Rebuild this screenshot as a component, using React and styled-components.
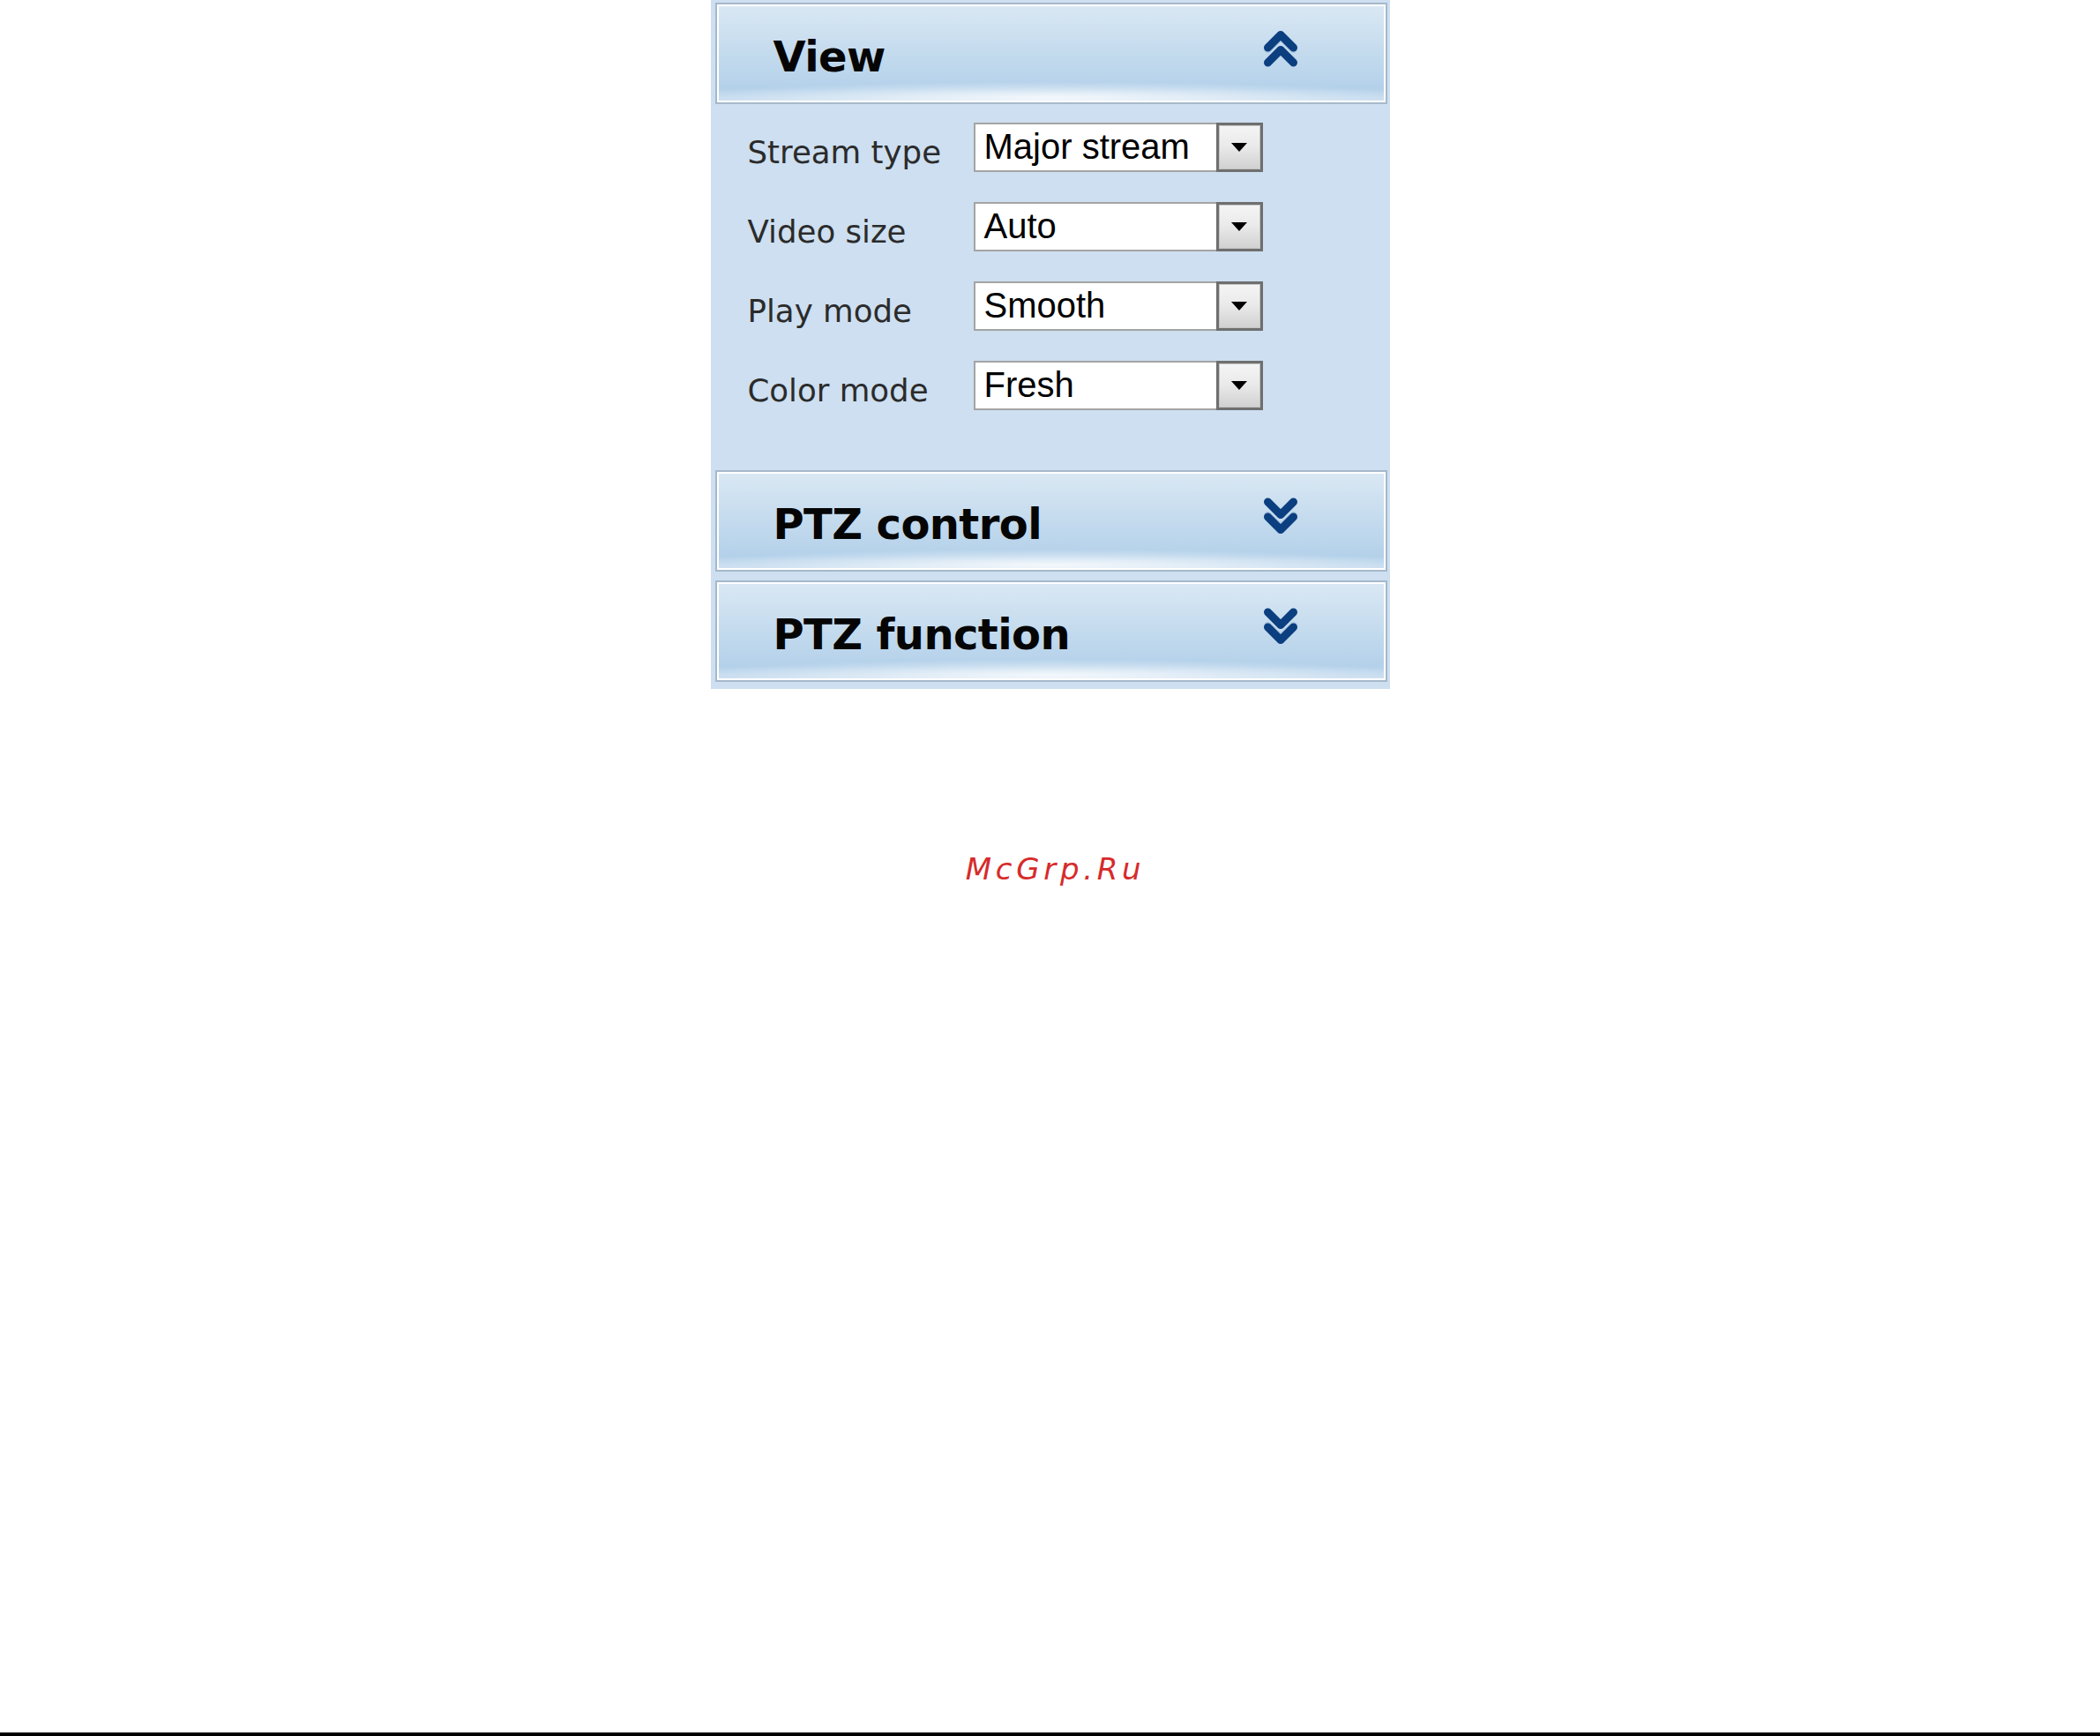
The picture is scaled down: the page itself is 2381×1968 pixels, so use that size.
import styled, { createGlobalStyle } from "styled-components";

const GlobalStyle = createGlobalStyle`
  html, body {
    margin: 0;
    padding: 0;
    background: #fff;
  }
  * {
    box-sizing: border-box;
  }
`;

const Page = styled.div`
  width: 2381px;
  height: 1968px;
  display: flex;
  flex-direction: column;
  align-items: center;
  border-bottom: 4px solid #000;
  background: #fff;
`;

const Panel = styled.div`
  width: 770px;
  display: flex;
  flex-direction: column;
  gap: 10px;
  padding: 3px 3px 8px 5px;
  background: #cddff0;
`;

const Section = styled.div`
  display: flex;
  flex-direction: column;
`;

const Header = styled.div`
  height: 115px;
  display: flex;
  align-items: center;
  justify-content: space-between;
  padding: 6px 99px 0 64px;
  border: 2px solid #a6b9cb;
  box-shadow: inset 0 0 0 2px #fff;
  background:
    radial-gradient(55% 16% at 50% 95%, rgba(255, 255, 255, 0.8), rgba(255, 255, 255, 0) 100%),
    linear-gradient(#dae8f4 0%, #c6dcee 45%, #b4d1ea 86%, #cde0f1 100%);
  cursor: pointer;
`;

const HeaderTitle = styled.h2`
  margin: 0;
  font-family: "DejaVu Sans", Verdana, sans-serif;
  font-weight: 700;
  font-size: 48px;
  line-height: 56px;
  letter-spacing: -0.6px;
  color: #050505;
`;

const ArrowIcon = styled.svg`
  width: 40px;
  height: 44px;
  margin-bottom: 17px;
  transform: ${(p) => (p.$down ? "rotate(180deg)" : "none")};
`;

const Body = styled.div`
  display: grid;
  grid-template-columns: 256px 328px;
  row-gap: 34px;
  padding: 21px 0 58px 37px;
`;

const Label = styled.label`
  display: flex;
  align-items: center;
  padding-top: 12px;
  font-family: "DejaVu Sans", Verdana, sans-serif;
  font-size: 35.6px;
  line-height: 42px;
  color: #2b2b2b;
`;

const SelectBox = styled.div`
  height: 56px;
  display: flex;
  border: 2px solid #a4a4a4;
  background: #fff;
`;

const SelectValue = styled.span`
  flex: 1;
  display: flex;
  align-items: center;
  padding: 0 0 2px 10px;
  font-family: "Liberation Sans", Arial, sans-serif;
  font-size: 40px;
  color: #000;
`;

const DropButton = styled.span`
  width: 53px;
  margin: -2px -2px -2px 0;
  display: flex;
  align-items: center;
  justify-content: center;
  border: 3px solid #6f6f6f;
  box-shadow: inset 0 0 0 1px #c4c4c4;
  background: linear-gradient(#f5f5f5 0%, #e9e9e9 50%, #d0d0d0 100%);

  &::after {
    content: "";
    width: 0;
    height: 0;
    border-left: 9px solid transparent;
    border-right: 9px solid transparent;
    border-top: 10px solid #000;
  }
`;

const Watermark = styled.div`
  margin: 184px 0 0 12px;
  font-family: "DejaVu Sans", Verdana, sans-serif;
  font-style: italic;
  font-size: 34px;
  line-height: 40px;
  letter-spacing: 4.7px;
  color: #d62b2b;
`;

function DoubleChevron({ down }) {
  return (
    <ArrowIcon $down={down} viewBox="0 0 40 44" fill="none">
      <path
        d="M5.5 38 L20 23.5 L34.5 38"
        stroke="#0b3f80"
        strokeWidth="9"
        strokeLinecap="round"
        strokeLinejoin="round"
      />
      <path
        d="M5.5 22.5 L20 8 L34.5 22.5"
        stroke="#a9c4de"
        strokeWidth="9"
        strokeLinecap="round"
        strokeLinejoin="round"
      />
      <path
        d="M5.5 21 L20 6.5 L34.5 21"
        stroke="#0b3f80"
        strokeWidth="9"
        strokeLinecap="round"
        strokeLinejoin="round"
      />
    </ArrowIcon>
  );
}

const viewRows = [
  { label: "Stream type", value: "Major stream" },
  { label: "Video size", value: "Auto" },
  { label: "Play mode", value: "Smooth" },
  { label: "Color mode", value: "Fresh" },
];

function SelectRow({ label, value }) {
  return (
    <>
      <Label>{label}</Label>
      <SelectBox>
        <SelectValue>{value}</SelectValue>
        <DropButton />
      </SelectBox>
    </>
  );
}

export default function App() {
  return (
    <>
      <GlobalStyle />
      <Page>
        <Panel>
          <Section>
            <Header>
              <HeaderTitle>View</HeaderTitle>
              <DoubleChevron />
            </Header>
            <Body>
              {viewRows.map((row) => (
                <SelectRow key={row.label} label={row.label} value={row.value} />
              ))}
            </Body>
          </Section>
          <Section>
            <Header>
              <HeaderTitle>PTZ control</HeaderTitle>
              <DoubleChevron down />
            </Header>
          </Section>
          <Section>
            <Header>
              <HeaderTitle>PTZ function</HeaderTitle>
              <DoubleChevron down />
            </Header>
          </Section>
        </Panel>
        <Watermark>McGrp.Ru</Watermark>
      </Page>
    </>
  );
}
